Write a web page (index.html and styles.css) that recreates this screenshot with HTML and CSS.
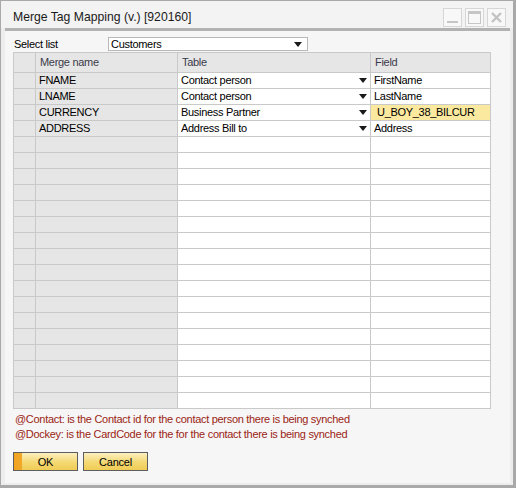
FILE: index.html
```html
<!DOCTYPE html>
<html>
<head>
<meta charset="utf-8">
<link rel="stylesheet" href="styles.css">
</head>
<body>
<div class="window">
  <div class="titlebar">
    <span class="title">Merge Tag Mapping (v.) [920160]</span>
    <div class="tbuttons">
      <span class="tbtn"><svg width="19" height="19" viewBox="0 0 19 19"><rect x="4" y="13" width="11" height="2" fill="#c6c6c6"/></svg></span>
      <span class="tbtn"><svg width="19" height="19" viewBox="0 0 19 19"><rect x="3.5" y="3.5" width="12" height="12" fill="none" stroke="#c6c6c6" stroke-width="1"/><rect x="4" y="4" width="11" height="2" fill="#c6c6c6"/></svg></span>
      <span class="tbtn"><svg width="19" height="19" viewBox="0 0 19 19"><path d="M5 5 L14 14 M14 5 L5 14" stroke="#c2c2c2" stroke-width="2.4"/></svg></span>
    </div>
  </div>
  <div class="pane">
    <div class="selrow">
      <span class="sellabel">Select list</span>
      <div class="combo"><span>Customers</span><i class="arrow"></i></div>
    </div>
    <div class="grid">
      <div class="row head"><div class="c rh"></div><div class="c g">Merge name</div><div class="c g">Table</div><div class="c g">Field</div></div>
      <div class="row"><div class="c rh"></div><div class="c g">FNAME</div><div class="c w dd">Contact person<i class="arrow"></i></div><div class="c w">FirstName</div></div>
      <div class="row"><div class="c rh"></div><div class="c g">LNAME</div><div class="c w dd">Contact person<i class="arrow"></i></div><div class="c w">LastName</div></div>
      <div class="row"><div class="c rh"></div><div class="c g">CURRENCY</div><div class="c w dd">Business Partner<i class="arrow"></i></div><div class="c y">U_BOY_38_BILCUR</div></div>
      <div class="row"><div class="c rh"></div><div class="c g">ADDRESS</div><div class="c w dd">Address Bill to<i class="arrow"></i></div><div class="c w">Address</div></div>
      <div class="row"><div class="c rh"></div><div class="c g"></div><div class="c w"></div><div class="c w"></div></div>
      <div class="row"><div class="c rh"></div><div class="c g"></div><div class="c w"></div><div class="c w"></div></div>
      <div class="row"><div class="c rh"></div><div class="c g"></div><div class="c w"></div><div class="c w"></div></div>
      <div class="row"><div class="c rh"></div><div class="c g"></div><div class="c w"></div><div class="c w"></div></div>
      <div class="row"><div class="c rh"></div><div class="c g"></div><div class="c w"></div><div class="c w"></div></div>
      <div class="row"><div class="c rh"></div><div class="c g"></div><div class="c w"></div><div class="c w"></div></div>
      <div class="row"><div class="c rh"></div><div class="c g"></div><div class="c w"></div><div class="c w"></div></div>
      <div class="row"><div class="c rh"></div><div class="c g"></div><div class="c w"></div><div class="c w"></div></div>
      <div class="row"><div class="c rh"></div><div class="c g"></div><div class="c w"></div><div class="c w"></div></div>
      <div class="row"><div class="c rh"></div><div class="c g"></div><div class="c w"></div><div class="c w"></div></div>
      <div class="row"><div class="c rh"></div><div class="c g"></div><div class="c w"></div><div class="c w"></div></div>
      <div class="row"><div class="c rh"></div><div class="c g"></div><div class="c w"></div><div class="c w"></div></div>
      <div class="row"><div class="c rh"></div><div class="c g"></div><div class="c w"></div><div class="c w"></div></div>
      <div class="row"><div class="c rh"></div><div class="c g"></div><div class="c w"></div><div class="c w"></div></div>
      <div class="row"><div class="c rh"></div><div class="c g"></div><div class="c w"></div><div class="c w"></div></div>
      <div class="row"><div class="c rh"></div><div class="c g"></div><div class="c w"></div><div class="c w"></div></div>
      <div class="row"><div class="c rh"></div><div class="c g"></div><div class="c w"></div><div class="c w"></div></div>
    </div>
    <div class="notes">
      <p>@Contact: is the Contact id for the contact person there is being synched</p>
      <p>@Dockey: is the CardCode for the for the contact there is being synched</p>
    </div>
    <div class="buttons">
      <button class="btn ok">OK</button>
      <button class="btn">Cancel</button>
    </div>
  </div>
</div>
</body>
</html>
```

FILE: styles.css
```css
html, body {
  margin: 0;
  padding: 0;
  background: #ffffff;
}
.window {
  width: 516px;
  height: 488px;
  box-sizing: border-box;
  border: 1px solid #a9a9a9;
  border-right-width: 3px;
  border-bottom-width: 3px;
  background: #ededed;
  padding: 0 3px 2px 4px;
  display: flex;
  flex-direction: column;
  font-family: "Liberation Sans", Arial, sans-serif;
  font-size: 11px;
  letter-spacing: -0.3px;
  color: #000;
}
.titlebar {
  height: 27px;
  flex: none;
  display: flex;
  align-items: center;
  justify-content: space-between;
  background: #f3f3f3;
  margin: 0 -3px 0 -4px;
  padding: 0 7px 0 12px;
}
.title {
  font-size: 12.2px;
  letter-spacing: 0;
  color: #1a1a1a;
  padding-top: 4px;
}
.tbuttons {
  display: flex;
  gap: 3px;
  padding-top: 5px;
}
.tbtn {
  width: 19px;
  height: 19px;
  box-sizing: border-box;
  border: 1px solid #d6d6d6;
  background: #f8f8f8;
  display: block;
}
.tbtn svg {
  display: block;
  margin: -1px;
}
.pane {
  flex: 1;
  min-height: 0;
  background: #f6f6f6;
  border-top: 3px solid #b2b2b2;
  padding: 6px 0 0 8px;
}
.selrow {
  display: flex;
  align-items: center;
  height: 14px;
}
.sellabel {
  width: 94px;
  padding-left: 1px;
}
.combo {
  position: relative;
  width: 200px;
  height: 14px;
  box-sizing: border-box;
  border: 1px solid #b8b8b8;
  background: #fff;
  padding-left: 2px;
  line-height: 12px;
}
.arrow {
  position: absolute;
  right: 5px;
  top: 4px;
  width: 0;
  height: 0;
  border-left: 4px solid transparent;
  border-right: 4px solid transparent;
  border-top: 5px solid #1a1a1a;
}
.grid {
  margin-top: 1px;
  width: 478px;
  box-sizing: border-box;
  background: #c9c9c9;
  padding: 1px;
  display: flex;
  flex-direction: column;
  gap: 1px;
}
.row {
  display: grid;
  grid-template-columns: 21px 141px 192px 119px;
  gap: 1px;
  height: 15px;
  flex: none;
}
.row.head {
  height: 19px;
}
.c {
  line-height: 15px;
  padding-left: 3px;
  white-space: nowrap;
  overflow: hidden;
  position: relative;
}
.head .c {
  line-height: 19px;
  padding-left: 4px;
  color: #3a3a4a;
}
.rh, .g {
  background: #e6e6e6;
}
.w {
  background: #ffffff;
}
.y {
  background: #fbe99f;
  padding-left: 6px;
}
.dd .arrow {
  right: 3px;
  top: 5px;
}
.notes {
  margin-top: 3px;
  color: #9b2414;
}
.notes p {
  margin: 0;
  padding-left: 2px;
  line-height: 15px;
}
.buttons {
  margin-top: 10px;
  display: flex;
  gap: 5px;
}
.btn {
  position: relative;
  width: 65px;
  height: 19px;
  box-sizing: border-box;
  border: 1px solid #5e5e5e;
  background: linear-gradient(#fcefc0, #f4d872 55%, #efcc55);
  font-family: "Liberation Sans", Arial, sans-serif;
  font-size: 11px;
  letter-spacing: -0.2px;
  color: #000;
  padding: 0;
  margin: 0;
}
.btn.ok {
  background: linear-gradient(90deg, #f2a320 0, #f0a82a 8px, transparent 8px), linear-gradient(#fcefc0, #f4d872 55%, #efcc55);
}
```
